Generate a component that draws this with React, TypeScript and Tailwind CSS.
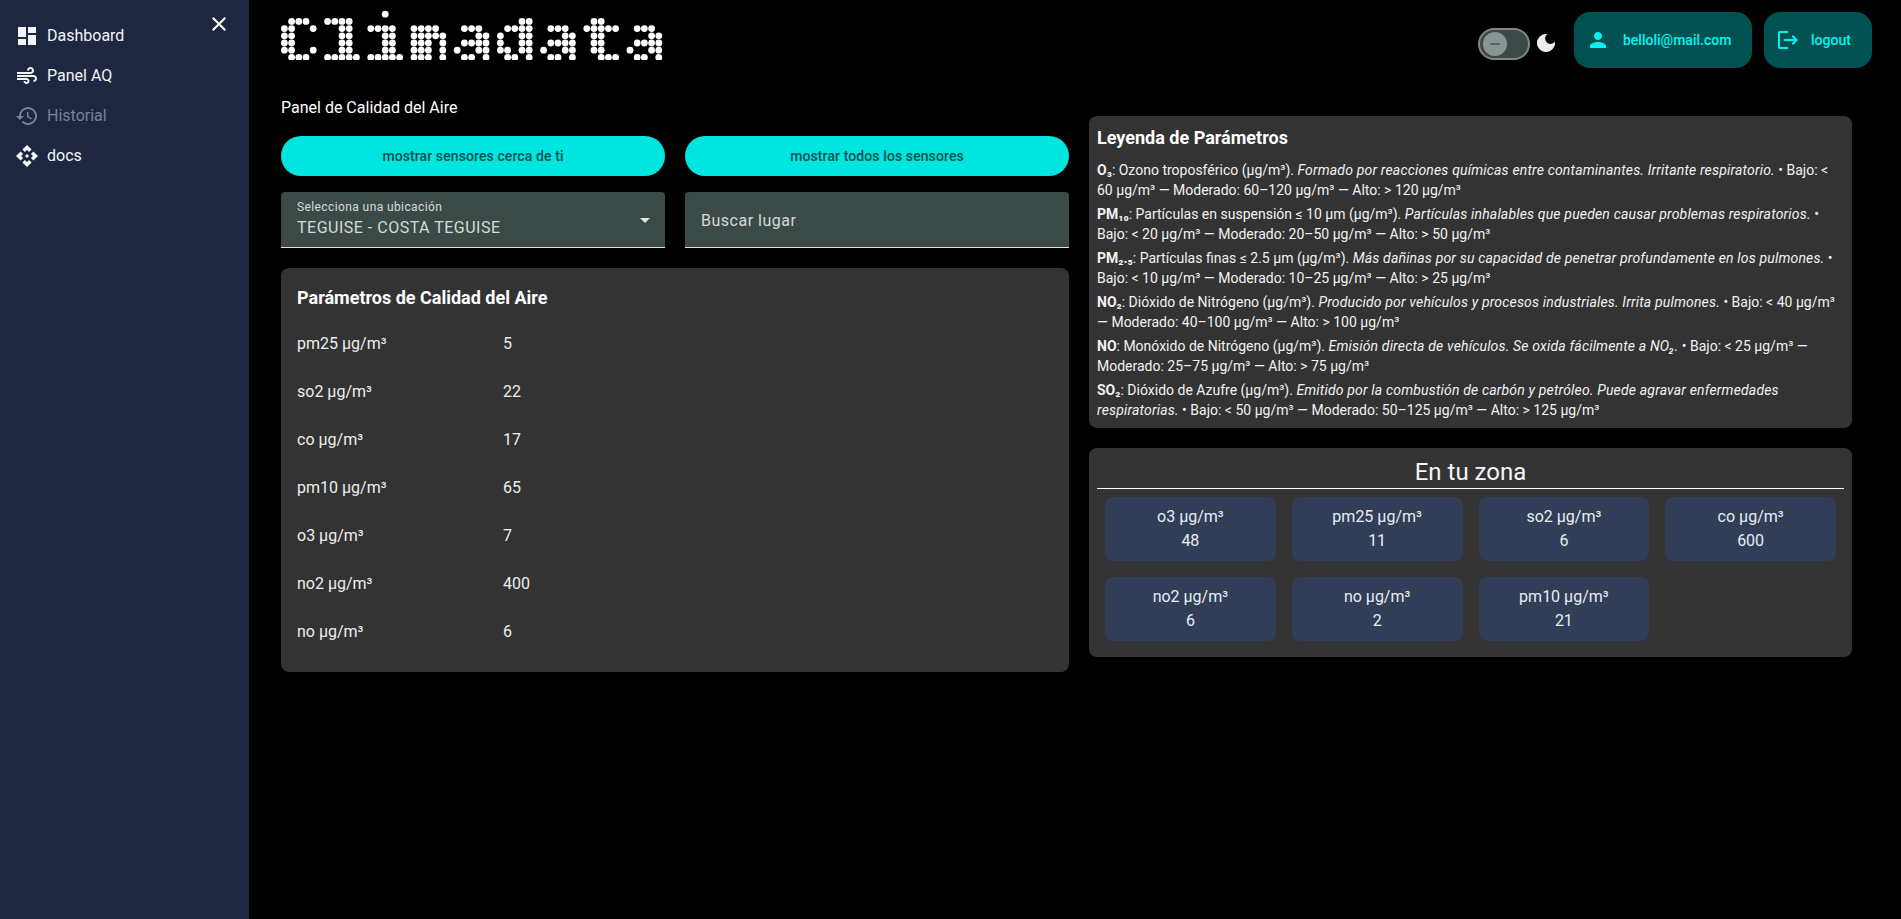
import React from "react";
import {
  MdApi,
  MdAir,
  MdArrowDropDown,
  MdClose,
  MdDarkMode,
  MdDashboard,
  MdHistory,
  MdLogout,
  MdPerson,
  MdRemove,
} from "react-icons/md";

// dot matrix logo: [col, row]
const glyphA = (o: number): number[][] => [
  [o + 1, 2], [o + 2, 2], [o + 3, 2],
  [o + 3, 3], [o + 4, 3],
  [o + 1, 4], [o + 2, 4], [o + 3, 4], [o + 4, 4],
  [o, 5], [o + 3, 5], [o + 4, 5],
  [o + 1, 6], [o + 2, 6], [o + 4, 6],
];

const logoDots: number[][] = [
  // c
  [1, 1], [2, 1], [3, 1], [0, 2], [1, 2], [4, 2], [0, 3], [1, 3], [0, 4], [1, 4], [0, 5], [1, 5], [4, 5], [1, 6], [2, 6], [3, 6],
  // l
  [6, 1], [7, 1], [8, 1], [9, 1], [8, 2], [9, 2], [8, 3], [9, 3], [8, 4], [9, 4], [8, 5], [9, 5], [6, 6], [7, 6], [8, 6], [9, 6], [10, 6],
  // i
  [14, 0], [12, 2], [13, 2], [14, 2], [15, 2], [14, 3], [15, 3], [14, 4], [15, 4], [14, 5], [15, 5], [12, 6], [13, 6], [14, 6], [15, 6], [16, 6],
  // m
  [18, 2], [19, 2], [20, 2], [21, 2], [18, 3], [19, 3], [20, 3], [21, 3], [22, 3], [18, 4], [19, 4], [20, 4], [22, 4], [18, 5], [19, 5], [20, 5], [22, 5], [18, 6], [19, 6], [20, 6], [22, 6],
  // a
  ...glyphA(24),
  // d
  [33, 1], [34, 1], [31, 2], [32, 2], [33, 2], [34, 2], [30, 3], [33, 3], [34, 3], [30, 4], [33, 4], [34, 4], [30, 5], [31, 5], [33, 5], [34, 5], [31, 6], [32, 6], [34, 6],
  // a
  ...glyphA(36),
  // t
  [43, 1], [44, 1], [42, 2], [43, 2], [44, 2], [45, 2], [46, 2], [43, 3], [44, 3], [43, 4], [44, 4], [43, 5], [44, 5], [44, 6], [45, 6], [46, 6],
  // a
  ...glyphA(48),
];

const Logo = () => (
  <svg width="392" height="60" viewBox="0 0 392 60" className="block">
    {logoDots.map(([c, r]) => (
      <circle key={`${c}-${r}`} cx={3.4 + c * 7.2} cy={14.2 + r * 7.2} r={3.4} fill="#fff" />
    ))}
  </svg>
);

const navItems = [
  { label: "Dashboard", icon: MdDashboard, muted: false },
  { label: "Panel AQ", icon: MdAir, muted: false },
  { label: "Historial", icon: MdHistory, muted: true },
  { label: "docs", icon: MdApi, muted: false },
];

const airParams = [
  ["pm25 µg/m³", "5"],
  ["so2 µg/m³", "22"],
  ["co µg/m³", "17"],
  ["pm10 µg/m³", "65"],
  ["o3 µg/m³", "7"],
  ["no2 µg/m³", "400"],
  ["no µg/m³", "6"],
];

const zoneParams = [
  ["o3 µg/m³", "48"],
  ["pm25 µg/m³", "11"],
  ["so2 µg/m³", "6"],
  ["co µg/m³", "600"],
  ["no2 µg/m³", "6"],
  ["no µg/m³", "2"],
  ["pm10 µg/m³", "21"],
];

const Desc = ({ children }: { children: React.ReactNode }) => <em className="tracking-[0.17px]">{children}</em>;

const App = () => {
  return (
    <div className="flex min-h-[919px] bg-black font-[Roboto,sans-serif] text-[#f1f1f1]">
      {/* Sidebar */}
      <aside className="relative w-[249px] shrink-0 bg-[#1e2640] pt-4">
        <MdClose className="absolute left-[207px] top-[12px] text-white" size={24} />
        {navItems.map((item) => (
          <div
            key={item.label}
            className={`flex h-10 items-center gap-2 pl-[15px] text-base ${
              item.muted ? "text-[#7c8494]" : "text-[#f1f5f9]"
            }`}
          >
            <item.icon size={24} />
            <span>{item.label}</span>
          </div>
        ))}
      </aside>

      {/* Main */}
      <main className="min-w-0 flex-1 pl-8">
        {/* Header */}
        <header className="flex h-20 items-start justify-between pr-[29px]">
          <Logo />
          <div className="flex items-center pt-3">
            <div className="mt-[7px] flex h-8 w-[52px] items-center rounded-full border-2 border-[#7d8884] bg-[#3c4a47] pl-[3px]">
              <div className="flex h-6 w-6 items-center justify-center rounded-full bg-[#8a9694] text-[#3c4a47]">
                <MdRemove size={16} />
              </div>
            </div>
            <MdDarkMode className="ml-1 mt-[5px] text-[#eceff1] drop-shadow-[0.5px_0.5px_0_#c98a4a]" size={24} />
            <button className="ml-4 flex h-14 w-[178px] items-center rounded-2xl bg-[#005252] pl-3 text-sm font-medium text-[#00f5f0]">
              <MdPerson size={24} />
              <span className="ml-[13px]">belloli@mail.com</span>
            </button>
            <button className="ml-3 flex h-14 w-[108px] items-center rounded-2xl bg-[#005252] pl-3 text-sm font-medium text-[#00f5f0]">
              <MdLogout size={24} />
              <span className="ml-[11px]">logout</span>
            </button>
          </div>
        </header>

        <div className="grid grid-cols-[788px_763px] gap-x-5 pt-4">
          {/* Left column */}
          <section className="flex flex-col">
            <h2 className="mb-4 h-6 text-base leading-[23px] text-white">Panel de Calidad del Aire</h2>
            <div className="mb-4 grid grid-cols-2 gap-5">
              <button className="h-10 rounded-[20px] bg-[#00e5e0] text-sm font-medium tracking-[0.1px] text-[#00504e]">
                mostrar sensores cerca de ti
              </button>
              <button className="h-10 rounded-[20px] bg-[#00e5e0] text-sm font-medium tracking-[0.1px] text-[#00504e]">
                mostrar todos los sensores
              </button>
            </div>
            <div className="mb-5 grid grid-cols-2 gap-5">
              <div className="relative h-14 rounded-t border-b border-[#dfe5e3] bg-[#3c4a47] px-4 pt-[7px] text-[#d5dbd9]">
                <div className="text-xs leading-4 tracking-[0.4px]">Selecciona una ubicación</div>
                <div className="mt-px text-base leading-6 tracking-[0.5px]">TEGUISE - COSTA TEGUISE</div>
                <MdArrowDropDown className="absolute right-2 top-4 text-[#e0e5e3]" size={24} />
              </div>
              <div className="flex h-14 items-center rounded-t border-b border-[#dfe5e3] bg-[#3c4a47] px-4 pt-[3px] text-base tracking-[0.5px] text-[#d5dbd9]">
                Buscar lugar
              </div>
            </div>
            <div className="rounded-lg bg-[#333333] p-4">
              <h3 className="mb-2 text-lg font-bold text-white">Parámetros de Calidad del Aire</h3>
              {airParams.map(([label, value]) => (
                <div key={label} className="flex py-3 text-base leading-6 text-[#eeeeee]">
                  <span className="w-[206px]">{label}</span>
                  <span>{value}</span>
                </div>
              ))}
            </div>
          </section>

          {/* Right column */}
          <section className="mt-5 flex flex-col gap-5">
            <div className="rounded-lg bg-[#333333] p-2">
              <h3 className="mb-2 text-lg font-bold text-white">Leyenda de Parámetros</h3>
              <div className="flex flex-col gap-1 text-sm text-[#f2f2f2]">
                <p>
                  <strong>O₃</strong>: Ozono troposférico (µg/m³).{" "}
                  <Desc>Formado por reacciones químicas entre contaminantes. Irritante respiratorio.</Desc> • Bajo: &lt; 60 µg/m³ — Moderado: 60–120 µg/m³ — Alto: &gt; 120 µg/m³
                </p>
                <p>
                  <strong>PM₁₀</strong>: Partículas en suspensión ≤ 10 µm (µg/m³).{" "}
                  <Desc>Partículas inhalables que pueden causar problemas respiratorios.</Desc> • Bajo: &lt; 20 µg/m³ — Moderado: 20–50 µg/m³ — Alto: &gt; 50 µg/m³
                </p>
                <p>
                  <strong>PM₂.₅</strong>: Partículas finas ≤ 2.5 µm (µg/m³).{" "}
                  <Desc>Más dañinas por su capacidad de penetrar profundamente en los pulmones.</Desc> • Bajo: &lt; 10 µg/m³ — Moderado: 10–25 µg/m³ — Alto: &gt; 25 µg/m³
                </p>
                <p>
                  <strong>NO₂</strong>: Dióxido de Nitrógeno (µg/m³).{" "}
                  <Desc>Producido por vehículos y procesos industriales. Irrita pulmones.</Desc> • Bajo: &lt; 40 µg/m³ — Moderado: 40–100 µg/m³ — Alto: &gt; 100 µg/m³
                </p>
                <p>
                  <strong>NO</strong>: Monóxido de Nitrógeno (µg/m³).{" "}
                  <Desc>Emisión directa de vehículos. Se oxida fácilmente a NO₂.</Desc> • Bajo: &lt; 25 µg/m³ — Moderado: 25–75 µg/m³ — Alto: &gt; 75 µg/m³
                </p>
                <p>
                  <strong>SO₂</strong>: Dióxido de Azufre (µg/m³).{" "}
                  <Desc>Emitido por la combustión de carbón y petróleo. Puede agravar enfermedades respiratorias.</Desc> • Bajo: &lt; 50 µg/m³ — Moderado: 50–125 µg/m³ — Alto: &gt; 125 µg/m³
                </p>
              </div>
            </div>

            <div className="rounded-lg bg-[#333333] p-2">
              <h3 className="border-b border-white text-center text-2xl text-[#f5f5f5]">En tu zona</h3>
              <div className="grid grid-cols-4 gap-4 p-2">
                {zoneParams.map(([label, value]) => (
                  <div key={label} className="flex h-16 flex-col items-center justify-center rounded-lg bg-[#323d57] text-base leading-6 text-[#e8edf2]">
                    <span>{label}</span>
                    <span>{value}</span>
                  </div>
                ))}
              </div>
            </div>
          </section>
        </div>
      </main>
    </div>
  );
};

export default App;
